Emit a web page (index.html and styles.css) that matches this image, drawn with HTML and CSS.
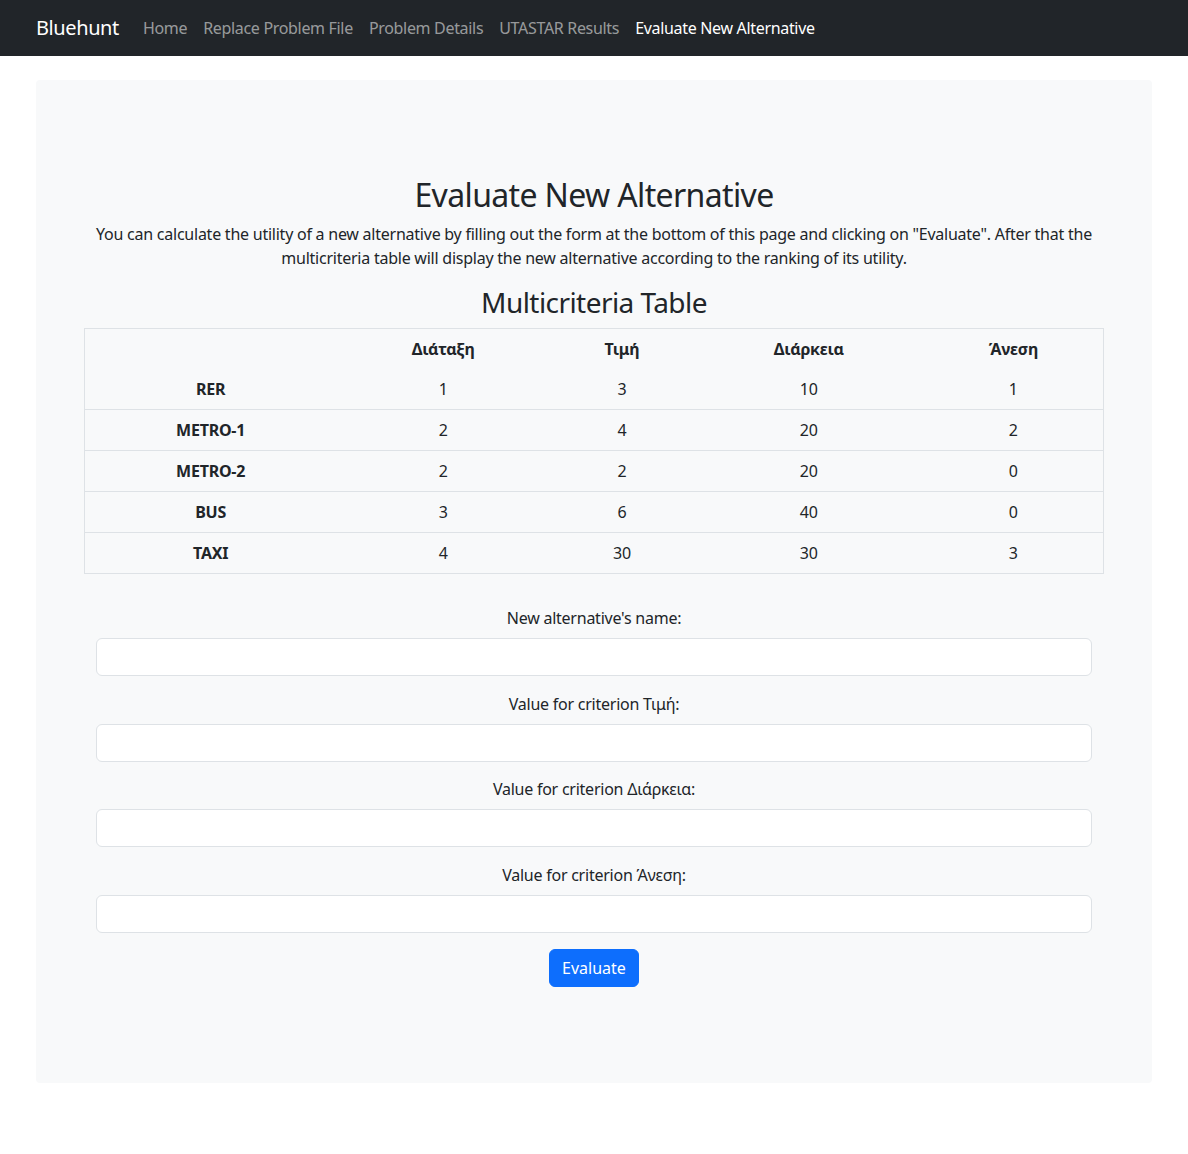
FILE: index.html
```html
<!DOCTYPE html>
<html lang="en">
<head>
<meta charset="utf-8">
<title>Bluehunt - Evaluate New Alternative</title>
<link rel="stylesheet" href="styles.css">
</head>
<body>
<nav class="navbar">
  <a class="brand" href="#">Bluehunt</a>
  <ul class="nav">
    <li><a class="nav-link" href="#">Home</a></li>
    <li><a class="nav-link" href="#">Replace Problem File</a></li>
    <li><a class="nav-link" href="#">Problem Details</a></li>
    <li><a class="nav-link" href="#">UTASTAR Results</a></li>
    <li><a class="nav-link active" href="#">Evaluate New Alternative</a></li>
  </ul>
</nav>
<main class="page">
  <section class="panel">
    <h1 class="title">Evaluate New Alternative</h1>
    <p class="lead">You can calculate the utility of a new alternative by filling out the form at the bottom of this page and clicking on "Evaluate". After that the multicriteria table will display the new alternative according to the ranking of its utility.</p>
    <h3 class="subtitle">Multicriteria Table</h3>
    <table class="mtable">
      <thead>
        <tr>
          <th class="c1"></th>
          <th class="c2">Διάταξη</th>
          <th class="c3">Τιμή</th>
          <th class="c4">Διάρκεια</th>
          <th class="c5">Άνεση</th>
        </tr>
      </thead>
      <tbody>
        <tr class="first"><th>RER</th><td>1</td><td>3</td><td>10</td><td>1</td></tr>
        <tr><th>METRO-1</th><td>2</td><td>4</td><td>20</td><td>2</td></tr>
        <tr><th>METRO-2</th><td>2</td><td>2</td><td>20</td><td>0</td></tr>
        <tr><th>BUS</th><td>3</td><td>6</td><td>40</td><td>0</td></tr>
        <tr><th>TAXI</th><td>4</td><td>30</td><td>30</td><td>3</td></tr>
      </tbody>
    </table>
    <form class="form">
      <div class="group">
        <label class="label" for="name">New alternative's name:</label>
        <input class="control" id="name" type="text">
      </div>
      <div class="group">
        <label class="label" for="c1">Value for criterion Τιμή:</label>
        <input class="control" id="c1" type="text">
      </div>
      <div class="group">
        <label class="label" for="c2">Value for criterion Διάρκεια:</label>
        <input class="control" id="c2" type="text">
      </div>
      <div class="group">
        <label class="label" for="c3">Value for criterion Άνεση:</label>
        <input class="control" id="c3" type="text">
      </div>
      <button class="btn" type="button">Evaluate</button>
    </form>
  </section>
</main>
</body>
</html>
```

FILE: styles.css
```css
* { box-sizing: border-box; }
html, body { margin: 0; padding: 0; }
body {
  font-family: "Noto Sans", "Open Sans", sans-serif;
  font-size: 16px;
  line-height: 1.5;
  letter-spacing: -0.015em;
  color: #212529;
  background: #fff;
}
.navbar {
  display: flex;
  align-items: center;
  height: 56px;
  padding: 0 36px;
  background: #212529;
}
.brand {
  font-size: 20px;
  color: #fff;
  text-decoration: none;
  margin-right: 16px;
  line-height: 30px;
  letter-spacing: -0.02em;
}
.nav {
  display: flex;
  list-style: none;
  margin: 0;
  padding: 0;
}
.nav-link {
  display: block;
  padding: 8px;
  color: rgba(255,255,255,.55);
  text-decoration: none;
  letter-spacing: -0.02em;
}
.nav-link.active { color: #fff; }
.page {
  padding: 24px 36px 72px;
}
.panel {
  background: #f8f9fa;
  border-radius: 4px;
  padding: 96px 48px 96px;
  text-align: center;
}
.title {
  font-size: 32px;
  font-weight: 400;
  line-height: 1.2;
  letter-spacing: -0.02em;
  margin: 0 0 8px;
}
.lead {
  margin: 0 0 16px;
}
.subtitle {
  font-size: 28px;
  font-weight: 400;
  line-height: 1.2;
  letter-spacing: -0.02em;
  margin: 0 0 8px;
}
.mtable {
  width: 100%;
  border-collapse: collapse;
  border: 1px solid #dee2e6;
  margin-bottom: 16px;
}
.mtable th, .mtable td {
  padding: 8px;
  text-align: center;
  font-weight: 400;
}
.mtable th { font-weight: 700; }
.mtable tbody tr { border-top: 1px solid #dee2e6; }
.mtable tbody tr.first { border-top: 0; }
.c1 { width: 252px; }
.c2 { width: 214px; }
.c3 { width: 144px; }
.c4 { width: 230px; }
.c5 { width: 180px; }
.form {
  padding: 16px 12px 0;
}
.group { margin-bottom: 15.6px; }
.label {
  display: block;
  margin-bottom: 8px;
}
.control {
  display: block;
  width: 100%;
  height: 38px;
  padding: 6px 12px;
  font: inherit;
  color: #212529;
  background: #fff;
  border: 1px solid #dee2e6;
  border-radius: 6px;
}
.btn {
  font: inherit;
  color: #fff;
  background: #0d6efd;
  border: 1px solid #0d6efd;
  border-radius: 6px;
  padding: 6px 12px;
  margin-top: 1px;
}
```
